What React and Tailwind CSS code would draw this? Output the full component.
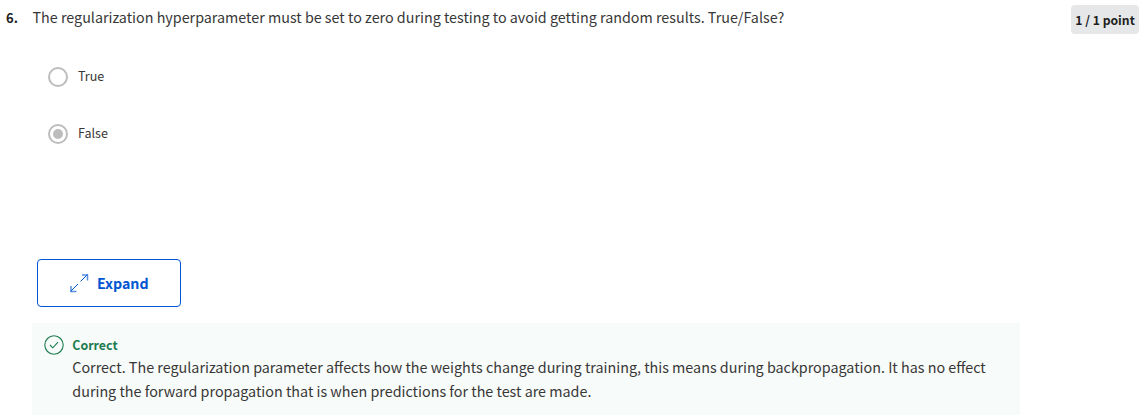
function Radio({ label, checked }) {
  return (
    <label className="flex h-5 items-center gap-[10px]">
      <span className="flex size-5 items-center justify-center rounded-full border-2 border-[#bdbdbd]">
        {checked && <span className="size-[10px] rounded-full bg-[#bdbdbd]" />}
      </span>
      <span className="pb-[2px] text-[12.55px] leading-5 whitespace-nowrap">{label}</span>
    </label>
  );
}

export default function App() {
  return (
    <main className="h-[417px] w-[1145px] overflow-hidden bg-white font-['Noto_Sans_CJK_SC','Noto_Sans',sans-serif] text-[#373737]">
      <header className="flex h-[67px] items-start pl-[6px] pr-[6px]">
        <span className="w-[26.5px] pt-[6px] text-[13px] leading-6 font-bold text-[#1f1f1f]">6.</span>
        <h1 className="grow pt-[5px] text-[14.32px] leading-6 font-normal whitespace-nowrap">
          The regularization hyperparameter must be set to zero during testing to avoid getting random results. True/False?
        </h1>
        <span className="mt-[5px] flex h-[29px] w-[68px] items-center justify-center rounded-[4px] bg-[#e5e7e8] pt-[2px] text-[12.2px] font-bold whitespace-nowrap text-[#1f1f1f]">
          1 / 1 point
        </span>
      </header>
      <div className="flex h-[192px] flex-col gap-[37px] pl-12">
        <Radio label="True" />
        <Radio label="False" checked />
      </div>
      <button className="ml-[37px] flex h-12 w-36 items-center rounded-[4px] border border-[#0056d2] pl-8 text-[14.2px] font-bold text-[#0056d2]">
        <svg width="20" height="20" viewBox="0 0 20 20" fill="none" stroke="currentColor" strokeWidth="1">
          <path d="M10.5 8.5l7-7M8 11L.5 18.5" />
          <path d="M12 2h5.5v5.5M1 13v5.5h5.5" strokeWidth="1.5" strokeOpacity=".65" />
        </svg>
        <span className="ml-[7px] pt-[2px]">Expand</span>
      </button>
      <section className="mt-4 ml-8 flex h-[92px] w-[988px] bg-[#f7fbf9] pt-3 pl-3">
        <svg className="shrink-0" width="20" height="20" viewBox="0 0 20 20" fill="none" stroke="#1d7c50" strokeWidth="1.1">
          <circle cx="10" cy="10" r="9.2" />
          <path d="M6 10l2.8 2.8 5.2-5.6" />
        </svg>
        <div className="ml-[8.3px] whitespace-nowrap">
          <h2 className="h-5 text-[12.4px] leading-5 font-bold text-[#1d7c50]">Correct</h2>
          <p className="text-[14.33px] leading-6">
            Correct. The regularization parameter affects how the weights change during training, this means during backpropagation. It has no effect
            <br />
            during the forward propagation that is when predictions for the test are made.
          </p>
        </div>
      </section>
    </main>
  );
}
